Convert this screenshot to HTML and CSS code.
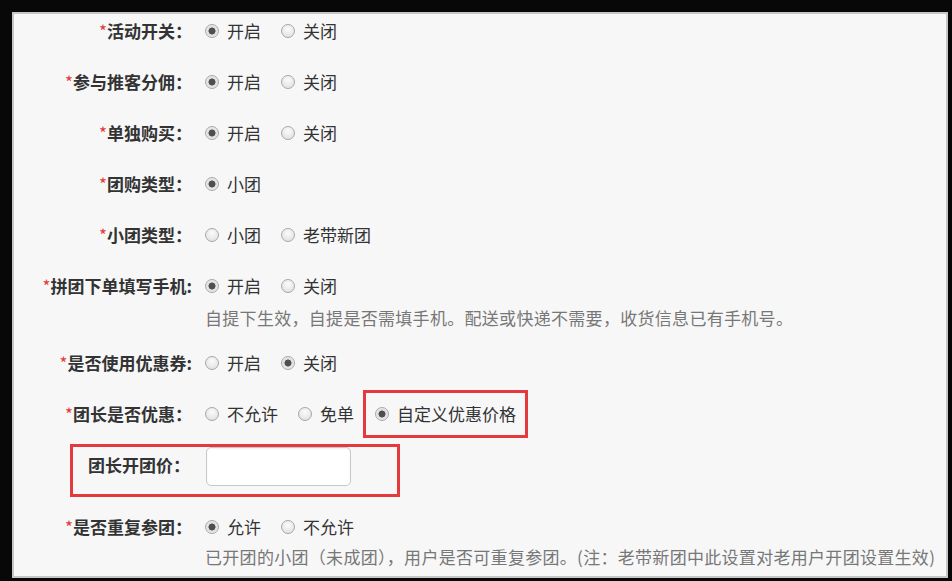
FILE: index.html
```html
<!DOCTYPE html>
<html lang="zh-CN">
<head>
  <meta charset="UTF-8">
  <meta name="viewport" content="width=device-width, initial-scale=1.0">
  <title>拼团设置</title>
  <link rel="stylesheet" href="styles.css">
</head>
<body>
  <form class="panel" name="groupSettings">
    <!-- 基本开关 -->
    <div class="row">
      <label class="name"><i>*</i>活动开关：</label>
      <div class="opts">
        <label class="opt"><input type="radio" name="active" checked>开启</label>
        <label class="opt"><input type="radio" name="active">关闭</label>
      </div>
    </div>
    <div class="row">
      <label class="name"><i>*</i>参与推客分佣：</label>
      <div class="opts">
        <label class="opt"><input type="radio" name="share" checked>开启</label>
        <label class="opt"><input type="radio" name="share">关闭</label>
      </div>
    </div>
    <div class="row">
      <label class="name"><i>*</i>单独购买：</label>
      <div class="opts">
        <label class="opt"><input type="radio" name="single" checked>开启</label>
        <label class="opt"><input type="radio" name="single">关闭</label>
      </div>
    </div>
    <div class="row">
      <label class="name"><i>*</i>团购类型：</label>
      <div class="opts">
        <label class="opt"><input type="radio" name="groupType" checked>小团</label>
      </div>
    </div>
    <div class="row">
      <label class="name"><i>*</i>小团类型：</label>
      <div class="opts">
        <label class="opt"><input type="radio" name="smallType">小团</label>
        <label class="opt"><input type="radio" name="smallType">老带新团</label>
      </div>
    </div>
    <div class="row has-help">
      <label class="name"><i>*</i>拼团下单填写手机:</label>
      <div class="opts">
        <label class="opt"><input type="radio" name="phone" checked>开启</label>
        <label class="opt"><input type="radio" name="phone">关闭</label>
      </div>
      <p class="help">自提下生效，自提是否需填手机。配送或快递不需要，收货信息已有手机号。</p>
    </div>
    <div class="row">
      <label class="name"><i>*</i>是否使用优惠券:</label>
      <div class="opts">
        <label class="opt"><input type="radio" name="coupon">开启</label>
        <label class="opt"><input type="radio" name="coupon" checked>关闭</label>
      </div>
    </div>
    <!-- 团长优惠 -->
    <div class="row leader">
      <label class="name"><i>*</i>团长是否优惠：</label>
      <div class="opts">
        <label class="opt"><input type="radio" name="leader">不允许</label>
        <label class="opt"><input type="radio" name="leader">免单</label>
        <label class="opt marked"><input type="radio" name="leader" checked>自定义优惠价格</label>
      </div>
    </div>
    <div class="price-box">
      <label class="name" for="leaderPrice">团长开团价：</label>
      <input class="price" type="text" id="leaderPrice" name="leaderPrice">
    </div>
    <div class="row has-help last">
      <label class="name"><i>*</i>是否重复参团：</label>
      <div class="opts">
        <label class="opt"><input type="radio" name="repeat" checked>允许</label>
        <label class="opt"><input type="radio" name="repeat">不允许</label>
      </div>
      <p class="help">已开团的小团（未成团），用户是否可重复参团。(注：老带新团中此设置对老用户开团设置生效)</p>
    </div>
  </form>
</body>
</html>
```

FILE: styles.css
```css
html {
  font: 17px/24px "Noto Sans CJK SC", "Microsoft YaHei", sans-serif;
}
body {
  margin: 0;
  padding: 12px 4px 3px 12px;
  background: #080808;
  color: #333;
}
.panel {
  box-sizing: border-box;
  width: 936px;
  height: 566px;
  margin: 0;
  padding-top: 5px;
  background: #f7f7f8;
  border: 2px solid #c6c6c6;
  overflow: hidden;
}
.row {
  display: grid;
  grid-template-columns: 178px 1fr;
  column-gap: 13px;
  margin-bottom: 27px;
}
.row.has-help {
  margin-bottom: 21px;
}
.row.leader {
  margin-bottom: 18px;
}
.name {
  text-align: right;
  font-weight: bold;
  white-space: nowrap;
}
.name i {
  font-style: normal;
  font-weight: normal;
  color: #e23b3b;
}
.opts {
  display: flex;
  gap: 20px;
}
.opt {
  display: flex;
  align-items: center;
  gap: 8px;
  white-space: nowrap;
}
.opt.marked {
  outline: 3px solid #e53a3d;
  outline-offset: 9px;
  margin-left: 1px;
}
.help {
  grid-column: 2;
  margin: 8px 0 0;
  color: #777;
  letter-spacing: 0.3px;
  white-space: nowrap;
}
.row.last .help {
  margin-top: 6px;
}
input[type=radio] {
  appearance: none;
  -webkit-appearance: none;
  box-sizing: border-box;
  width: 14px;
  height: 14px;
  margin: 0;
  border: 1px solid #a8a8a8;
  border-radius: 50%;
  background: radial-gradient(circle at 50% 35%, #fbfbfb, #dcdcdc);
}
input[type=radio]:checked {
  background: radial-gradient(circle, #4f4f4f 0 3.2px, #dedede 3.8px, #f6f6f6);
}
.price-box {
  display: flex;
  align-items: flex-start;
  gap: 16px;
  width: 330px;
  height: 53px;
  box-sizing: border-box;
  margin: 0 0 18px 56px;
  padding-top: 0;
  border: 3px solid #e53a3d;
}
.price-box .name {
  width: 117px;
  padding-top: 6px;
}
.price {
  box-sizing: border-box;
  width: 145px;
  height: 39px;
  margin: 0;
  border: 1px solid #c8c8c8;
  border-radius: 5px;
  background: #fff;
  box-shadow: inset 0 1px 2px rgba(0, 0, 0, 0.06);
  font: inherit;
}
```
